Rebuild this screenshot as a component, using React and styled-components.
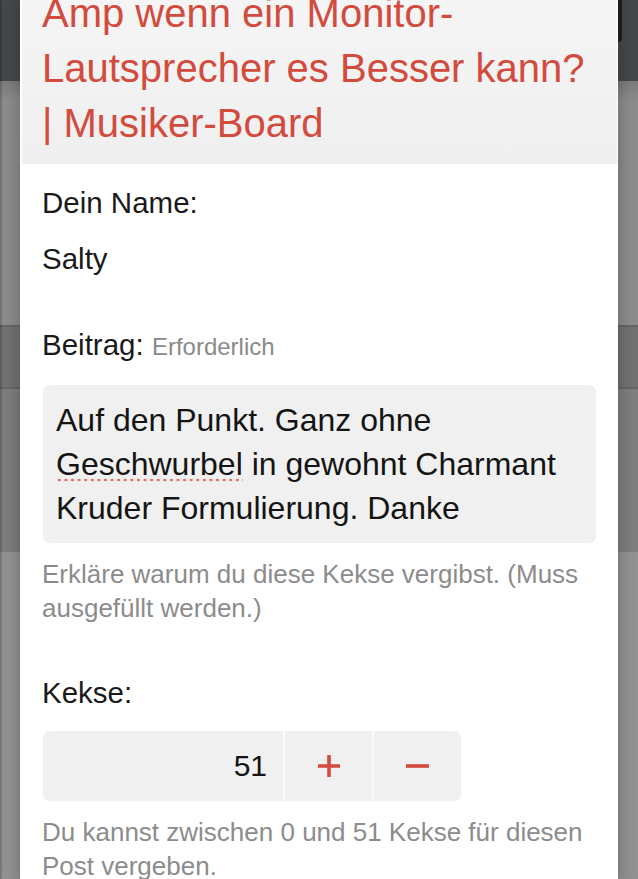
import React from "react";
import styled, { createGlobalStyle } from "styled-components";

const GlobalStyle = createGlobalStyle`
  html, body {
    margin: 0;
    padding: 0;
  }
  body {
    font-family: "Liberation Sans", Arial, Helvetica, sans-serif;
    -webkit-font-smoothing: antialiased;
  }
`;

const App = () => {
  return (
    <>
      <GlobalStyle />
      <Page>
        <Modal>
          <Header>
            <Title>
              Amp wenn ein Monitor-
              <br />
              Lautsprecher es Besser kann?
              <br />| Musiker-Board
            </Title>
          </Header>
          <Body>
            <Field>
              <Label>Dein Name:</Label>
              <Value>Salty</Value>
            </Field>

            <Field>
              <Label>
                Beitrag: <Required>Erforderlich</Required>
              </Label>
              <TextArea>
                Auf den Punkt. Ganz ohne <Misspelled>Geschwurbel</Misspelled> in
                gewohnt Charmant Kruder Formulierung. Danke
              </TextArea>
              <Hint>Erkläre warum du diese Kekse vergibst. (Muss ausgefüllt werden.)</Hint>
            </Field>

            <Field>
              <Label>Kekse:</Label>
              <Stepper>
                <Amount>51</Amount>
                <StepButton aria-label="mehr">
                  <svg width="22" height="22" viewBox="0 0 22 22">
                    <path d="M11 0v22M0 11h22" stroke="#d24b3d" strokeWidth="3.6" />
                  </svg>
                </StepButton>
                <StepButton aria-label="weniger">
                  <svg width="23" height="22" viewBox="0 0 23 22">
                    <path d="M0 11h23" stroke="#d24b3d" strokeWidth="3.6" />
                  </svg>
                </StepButton>
              </Stepper>
              <Hint>Du kannst zwischen 0 und 51 Kekse für diesen Post vergeben.</Hint>
            </Field>
          </Body>
        </Modal>
        <CornerShade />
      </Page>
    </>
  );
};

export default App;

const Page = styled.div`
  position: relative;
  width: 638px;
  height: 879px;
  overflow: hidden;
  background:
    linear-gradient(to right, rgba(0, 0, 0, 0.18) 0 2px, transparent 2px),
    linear-gradient(
      to bottom,
      #45474b 0 81px,
      #7a7a7a 81px,
      #8c8c8c 100px 325px,
      #666 325px 327px,
      #727272 327px 387px,
      #666 387px 389px,
      #7e7e7e 389px 552px,
      #929292 552px
    );
`;

const CornerShade = styled.div`
  position: absolute;
  top: -10px;
  left: 612px;
  width: 10px;
  height: 52px;
  border-radius: 0 0 4px 0;
  background: #1e1f21;
`;

const Modal = styled.div`
  position: relative;
  z-index: 1;
  margin-left: 20px;
  width: 598px;
  min-height: 879px;
  background: #fff;
  box-shadow: 0 0 16px rgba(0, 0, 0, 0.28);
`;

const Header = styled.div`
  margin: 0 1px 0 2px;
  height: 164px;
  box-sizing: border-box;
  padding: 0 20px;
  overflow: hidden;
  background: linear-gradient(to bottom, #f5f5f5, #efefef);
`;

const Title = styled.h1`
  margin: -14px 0 0;
  font-size: 40px;
  line-height: 55px;
  font-weight: 400;
  color: #d24b3d;
`;

const Body = styled.div`
  display: flex;
  flex-direction: column;
  gap: 50px;
  padding: 21px 22px 0;
`;

const Field = styled.div`
  display: flex;
  flex-direction: column;
`;

const Label = styled.div`
  font-size: 29.5px;
  line-height: 36px;
  color: #1a1a1a;
  margin-bottom: 20px;
`;

const Value = styled.div`
  font-size: 29.5px;
  line-height: 36px;
  color: #1a1a1a;
`;

const Required = styled.span`
  font-size: 24px;
  color: #8a8a8a;
`;

const TextArea = styled.div`
  margin-left: 1px;
  padding: 13px 14px 12px 13px;
  font-size: 32px;
  line-height: 44px;
  color: #141414;
  background: #f0f0f0;
  border-radius: 7px;
  box-shadow: 0 1px 1px rgba(0, 0, 0, 0.07);
`;

const Misspelled = styled.span`
  background-image: radial-gradient(circle, #e46a62 1.2px, transparent 1.6px);
  background-size: 6.6px 4px;
  background-repeat: repeat-x;
  background-position: 0 100%;
`;

const Hint = styled.div`
  margin-top: 15px;
  font-size: 26px;
  line-height: 34px;
  color: #8c8c8c;
`;

const Stepper = styled.div`
  display: flex;
  width: 418px;
  height: 69px;
  margin-left: 1px;
  border-radius: 7px;
  overflow: hidden;
  background: #f0f0f0;
  box-shadow: 0 1px 1px rgba(0, 0, 0, 0.07);
`;

const Amount = styled.div`
  width: 240px;
  box-sizing: border-box;
  padding-right: 16px;
  display: flex;
  align-items: center;
  justify-content: flex-end;
  font-size: 30px;
  color: #141414;
`;

const StepButton = styled.div`
  flex: 1;
  display: flex;
  align-items: center;
  justify-content: center;
  border-left: 2px solid #fafafa;
`;
